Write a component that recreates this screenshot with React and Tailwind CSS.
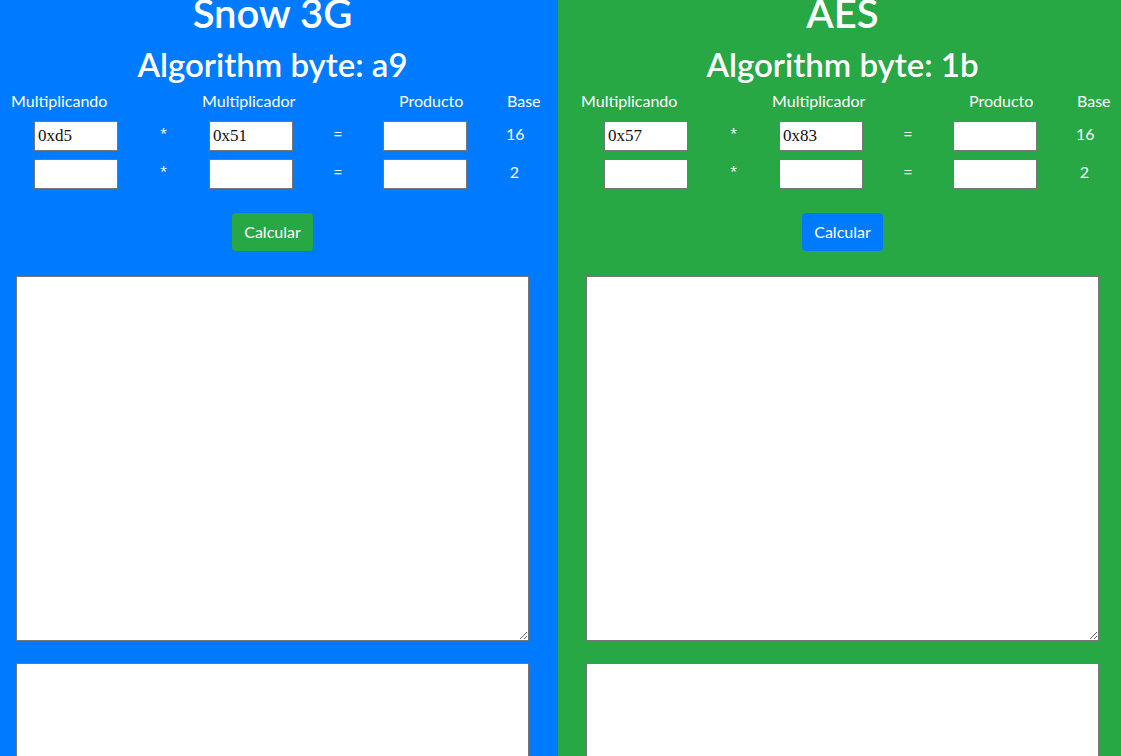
import React from "react";

const panels = [
  {
    title: "Snow 3G",
    byte: "a9",
    bg: "bg-[#007bff]",
    btn: "bg-[#28a745]",
    pad: "w-[558px] pr-[13px]",
    a: "0xd5",
    b: "0x51",
  },
  {
    title: "AES",
    byte: "1b",
    bg: "bg-[#28a745]",
    btn: "bg-[#007bff]",
    pad: "flex-1 pl-[12px]",
    a: "0x57",
    b: "0x83",
  },
];

function Field({ value }) {
  return (
    <input
      type="text"
      defaultValue={value}
      className="w-[84px] h-[30px] bg-white border border-[#767676] px-[3px] text-[17px] text-[#111] outline-none [font-family:'Liberation_Serif',serif]"
    />
  );
}

function Row({ a, b, base }) {
  return (
    <div className="flex items-center h-[30px]">
      <div className="w-[34px]" />
      <Field value={a} />
      <div className="w-[91px] pb-[6px] text-center text-[13px] leading-[16px] [font-family:'Open_Sans',sans-serif]">*</div>
      <Field value={b} />
      <div className="w-[90px] pb-[4px] text-center">=</div>
      <Field value="" />
      <div className="w-[39px]" />
      <div className="w-[17px] pb-[5px] text-center">{base}</div>
    </div>
  );
}

function Panel({ p }) {
  return (
    <div className={`${p.bg} ${p.pad}`}>
      <div className="w-[545px] flex flex-col text-white">
        <h1 className="-mt-[11px] text-center text-[40px] leading-[48px] font-semibold">
          {p.title}
        </h1>
        <h2 className="mt-[7px] text-center text-[33px] leading-[40px] font-semibold">
          Algorithm byte: {p.byte}
        </h2>

        <div className="mt-[5px] flex h-[24px] pl-[11px] text-[16px] leading-[24px]">
          <div className="w-[191px]">Multiplicando</div>
          <div className="w-[197px]">Multiplicador</div>
          <div className="w-[108px]">Producto</div>
          <div>Base</div>
        </div>

        <div className="mt-[8px] flex flex-col gap-[8px] text-[16px]">
          <Row a={p.a} b={p.b} base="16" />
          <Row a="" b="" base="2" />
        </div>

        <button
          className={`mt-[24px] self-center w-[81px] h-[38px] rounded-[4px] ${p.btn} text-white text-[16px]`}
        >
          Calcular
        </button>

        <textarea className="mt-[25px] ml-[16px] w-[513px] h-[365px] bg-white border border-[#767676] outline-none" />
        <textarea className="mt-[22px] ml-[16px] w-[513px] h-[365px] shrink-0 bg-white border border-[#767676] outline-none" />
      </div>
    </div>
  );
}

export default function App() {
  return (
    <div className="flex h-[756px] w-full overflow-hidden [font-family:Lato,'Noto_Sans',sans-serif]">
      {panels.map((p) => (
        <Panel key={p.title} p={p} />
      ))}
    </div>
  );
}
